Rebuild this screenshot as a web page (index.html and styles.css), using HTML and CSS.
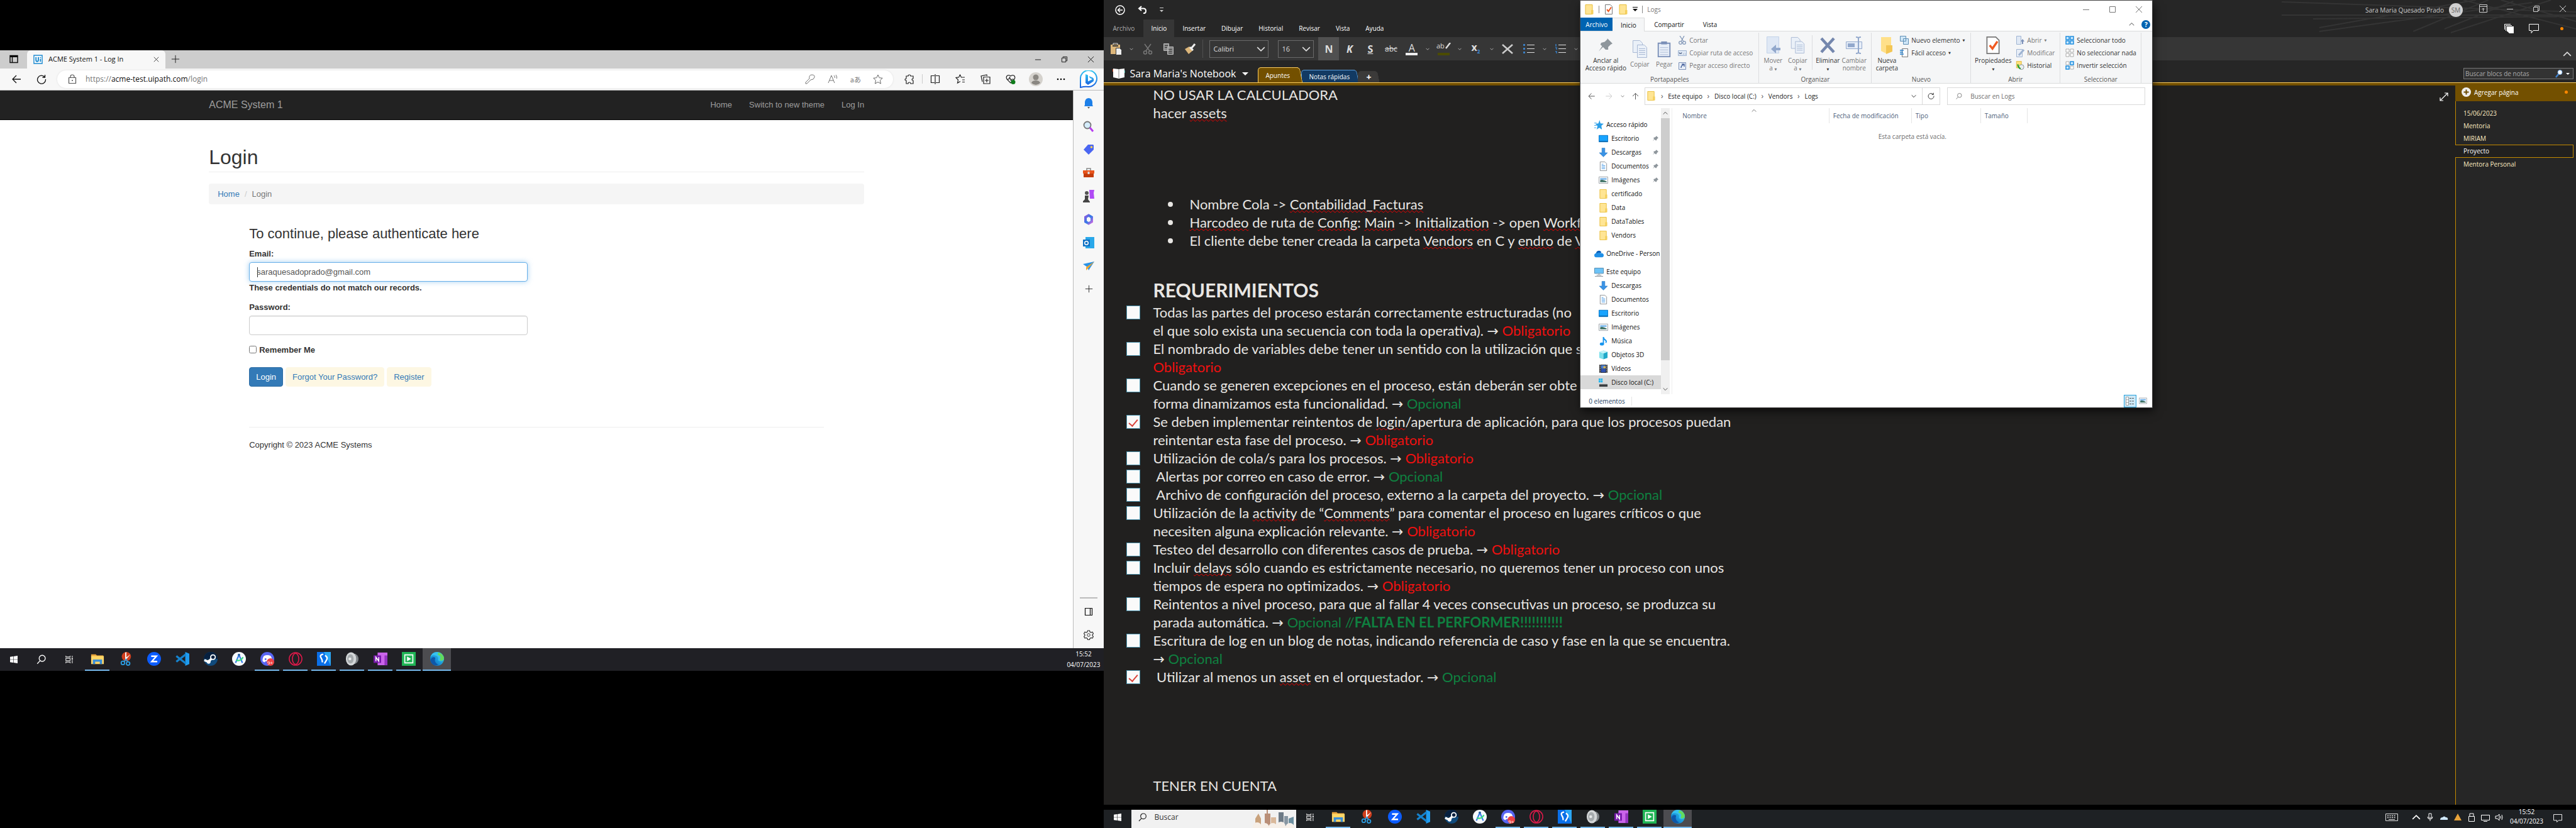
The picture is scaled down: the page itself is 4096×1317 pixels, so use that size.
FILE: index.html
```html
<!DOCTYPE html>
<html lang="es">
<head>
<meta charset="utf-8">
<title>Escritorio</title>
<link rel="stylesheet" href="styles.css">
</head>
<body>
<svg class="sprite" aria-hidden="true">
  <defs>
    <linearGradient id="edgeA" x1="0" y1="1" x2="1" y2="0"><stop offset="0" stop-color="#0c59a4"/><stop offset=".5" stop-color="#1b9de2"/><stop offset="1" stop-color="#5fd85a"/></linearGradient>
    <linearGradient id="bingA" x1="0" y1="0" x2="0" y2="1"><stop offset="0" stop-color="#2fc6f0"/><stop offset="1" stop-color="#1b62e0"/></linearGradient>
    <linearGradient id="m365" x1="0" y1="0" x2="1" y2="1"><stop offset="0" stop-color="#8a5be0"/><stop offset=".5" stop-color="#2f7be8"/><stop offset="1" stop-color="#c86ae0"/></linearGradient>
  </defs>
  <symbol id="i-win" viewBox="0 0 24 24"><path fill="#fff" d="M4 6.300l6.700-1v6.200H4zM11.500 5.200L20 4v7.500h-8.500zM4 12.400h6.700v6.300L4 17.700zM11.500 12.400H20V20l-8.500-1.200z"/></symbol>
  <symbol id="i-find" viewBox="0 0 24 24"><g fill="none" stroke="currentColor" stroke-width="1.800"><circle cx="13.500" cy="9.500" r="6.500"/><path d="M9 14.500L3 21"/></g></symbol>
  <symbol id="i-task" viewBox="0 0 24 24"><g fill="none" stroke="#ddd" stroke-width="1.500"><path d="M5 4v2.500h9V4M5 20v-2.500h9V20M5 9.500h9v5H5zM18.500 4v4M18.500 13v7"/></g><path fill="#ddd" d="M17 9h3v3h-3z"/></symbol>
  <symbol id="i-files" viewBox="0 0 24 24"><path fill="#e8a33a" d="M1 4h8l2 2h11v3H1z"/><path fill="#ffd667" d="M1 7h22v14H1z"/><path fill="#3b8fd8" d="M4 13h16v8h-4v-4H8v4H4z"/></symbol>
  <symbol id="i-snip" viewBox="0 0 24 24"><circle cx="13" cy="8" r="8" fill="#cf3e1d"/><path fill="#fff" d="M11 1l2-1v13h-2zM20 4l-8 10-1-3z"/><g fill="none" stroke="#2c9be0" stroke-width="2"><circle cx="7" cy="19" r="3"/><circle cx="16" cy="20" r="3"/><path d="M9 17l4-5M15 17l-3-5"/></g></symbol>
  <symbol id="i-zoom" viewBox="0 0 24 24"><circle cx="12" cy="12" r="12" fill="#0b5cff"/><path fill="none" stroke="#fff" stroke-width="2.600" d="M7 7.300h9L8 16.700h9.500"/></symbol>
  <symbol id="i-code" viewBox="0 0 24 24"><path fill="#1f9cf0" d="M17 0l7 3v18l-7 3z"/><path fill="none" stroke="#1583cf" stroke-width="3.500" d="M18 4L1.500 17M18 20L1.500 7"/></symbol>
  <symbol id="i-steam" viewBox="0 0 24 24"><circle cx="12" cy="12" r="12" fill="#104a7c"/><path fill="#07203f" d="M0 12a12 12 0 0 1 24 0z"/><circle cx="16" cy="9" r="4" fill="none" stroke="#fff" stroke-width="2"/><path stroke="#fff" stroke-width="4" d="M1 14l7 3 5-5"/><circle cx="8.500" cy="17" r="3.400" fill="#fff"/></symbol>
  <symbol id="i-studio" viewBox="0 0 24 24"><circle cx="12" cy="12" r="12" fill="#f7fafd"/><path fill="none" stroke="#3a7ee8" stroke-width="2.500" d="M12 5L6 19M12 5l6 14"/><path fill="none" stroke="#3ddc84" stroke-width="2.500" d="M7 14q8 3 12-5"/><circle cx="12" cy="5" r="2" fill="#225a9c"/></symbol>
  <symbol id="i-discord" viewBox="0 0 24 24"><circle cx="12" cy="12" r="12" fill="#5865f2"/><path fill="#fff" d="M6 7q6-3 12 0 3 5 2 9l-3 2-2-2H9l-2 2-3-2q-1-4 2-9z"/><circle cx="9" cy="12.500" r="1.600" fill="#5865f2"/><circle cx="17.500" cy="17.500" r="6.500" fill="#ee4245"/></symbol>
  <symbol id="i-opera" viewBox="0 0 24 24"><g fill="none" stroke="#e0194a" stroke-width="1.700"><ellipse cx="12" cy="12" rx="11" ry="11"/><ellipse cx="12" cy="12" rx="5.500" ry="9.500"/></g></symbol>
  <symbol id="i-ss" viewBox="0 0 24 24"><path fill="#0a6fe8" d="M0 0h24v24H0z"/><path fill="#2aa7f5" d="M12 0h12v24z"/><path fill="none" stroke="#fff" stroke-width="2.500" d="M11 4Q4 5 7 10t2 8M14 6q5 3 3 7t-4 7"/></symbol>
  <symbol id="i-speaker" viewBox="0 0 24 24"><ellipse cx="15" cy="12" rx="8" ry="9" fill="#7d8286"/><ellipse cx="10" cy="12" rx="9" ry="11.500" fill="#d3d6d8"/><ellipse cx="9" cy="12" rx="5.500" ry="8" fill="#a5aaad"/><circle cx="8" cy="12" r="2.500" fill="#e8eaeb"/></symbol>
  <symbol id="i-onenote" viewBox="0 0 24 24"><path fill="#ca64ea" d="M7 1h17v22H7z"/><path fill="#9332bf" d="M19 6h5v17h-5z"/><path fill="#7719aa" d="M0 6h13v13H0z"/><path fill="none" stroke="#fff" stroke-width="1.700" d="M4 16V9l5 7V9"/></symbol>
  <symbol id="i-camt" viewBox="0 0 24 24"><path fill="#1fb455" d="M0 0h24v24H0z"/><path fill="none" stroke="#fff" stroke-width="1.800" d="M5 5h14v14H5z"/><path fill="#fff" d="M9 8l7 4-7 4z"/></symbol>
  <symbol id="i-edge" viewBox="0 0 24 24"><circle cx="12" cy="12" r="12" fill="url(#edgeA)"/><path fill="#0f57a8" d="M9 10q-3 8 5 12Q3 26 .5 14 4 7 9 10z"/><path fill="#35c1f1" d="M0 11Q2 5 8 6q7 1 6 7-1 3 6 3 4-1 4-4-1-11-12-12Q2 0 0 11z"/><path fill="#63dc5c" d="M13 5q7 2 4 8-1 2 3 2 4-1 4-4Q22 2 14 1z"/></symbol>
  <symbol id="i-folder" viewBox="0 0 16 16"><path fill="#ffe594" stroke="#e9bf3c" d="M2 .5h11v15H2z"/><path fill="#f4cf5c" d="M11 9h3.500v6.500H11z"/></symbol>
  <symbol id="i-down" viewBox="0 0 16 16"><path fill="#3a93e5" stroke="#2876bf" stroke-width=".6" d="M5.500.5h5v8H15l-7 7-7-7h4.500z"/></symbol>
  <symbol id="i-doc" viewBox="0 0 16 16"><path fill="#fff" stroke="#8a8f94" d="M2.500.5h8l3 3v12h-11z"/><path stroke="#3a93e5" d="M5 4.500h3M5 7h6M5 9.500h6M5 12h6"/></symbol>
  <symbol id="i-desk" viewBox="0 0 16 16"><path fill="#18a3ff" stroke="#0a74c4" d="M.5 2.500h15v11H.5z"/><path stroke="#07528d" d="M1 12.500h14"/></symbol>
  <symbol id="i-img" viewBox="0 0 16 16"><path fill="#fff" stroke="#9aa0a6" d="M.5 2.500h15v11H.5z"/><path fill="#7fb9ec" d="M2.500 4.500h11v3h-11z"/><path fill="#3b6f63" d="M2.500 8q4-2 11 2v1.500h-11z"/></symbol>
  <symbol id="i-music" viewBox="0 0 16 16"><path fill="none" stroke="#1795ee" stroke-width="2" d="M8 13V1q0 3 3 5t1 5"/><ellipse cx="5.500" cy="13" rx="3.500" ry="2.500" fill="#1795ee"/></symbol>
  <symbol id="i-cube" viewBox="0 0 16 16"><path fill="#7de0ec" d="M1 3l7-2.500v15L1 13z"/><path fill="#20a9c9" d="M8 .5L15 3v10l-7 2.500z"/><path fill="#c6f4f8" d="M1 3l7-2.500L15 3 8 5.500z"/></symbol>
  <symbol id="i-video" viewBox="0 0 16 16"><path fill="#333" d="M1 1h14v14H1z"/><path fill="#4a7fd4" d="M4 2h8v6H4z"/><path fill="#2d4fae" d="M4 8.500h8V14H4z"/><path fill="#e9b93c" d="M8 4h4v3H8z"/><path stroke="#ddd" stroke-dasharray="1.500 1.500" d="M2.500 1v14M13.500 1v14"/></symbol>
  <symbol id="i-disk" viewBox="0 0 16 16"><path fill="#19b5f1" d="M0 1h3v3H0zM3.600 1h3v3h-3zM0 4.600h3v3H0zM3.600 4.600h3v3h-3z"/><path fill="#c9ccd0" d="M2 9h12l1 2H1z"/><path fill="#3a3d40" d="M1 11h14v4H1z"/></symbol>
  <symbol id="i-pc" viewBox="0 0 16 16"><path fill="#6cc3f7" stroke="#4d87ad" d="M.5 1.500h15v9H.5z"/><path stroke="#7f8a92" d="M8 11v2M4 13.500h8M1 15.500h14"/></symbol>
  <symbol id="i-cloud" viewBox="0 0 16 16"><path fill="#0a5fb8" d="M3 9q0-6 5-6 3 0 4 3z"/><path fill="#1f8fe6" d="M0 11q0-4 5-4 3-2 6 0 5 0 5 4 0 3-3 3H3q-3 0-3-3z"/></symbol>
  <symbol id="i-star" viewBox="0 0 16 16"><path fill="#2b9fe8" d="M9 0l1.500 5.500L16 6l-4 3.500L13 16l-4.500-3L4 16l1.500-6L2 6.500l5-.8z"/><path stroke="#2b9fe8" d="M0 5h4M0 9h4M0 13h3"/></symbol>
  <symbol id="i-pin" viewBox="0 0 16 16"><path fill="#8e969c" d="M10 0l6 6-2 1-3 3 0 3-3 0-3-3-5 5 4-6-2-2 1-2 4-1 3-3z"/></symbol>
  <symbol id="i-clock" viewBox="0 0 16 16"><path fill="#ffe07a" stroke="#e0b53a" d="M1.500.5h9v12h-9z"/><circle cx="10.500" cy="11" r="4.500" fill="#e9eef0" stroke="#7d868c"/><path stroke="#23a12c" stroke-width="2.500" fill="none" d="M4 6q0 6 5 8"/></symbol>
  <symbol id="i-chev" viewBox="0 0 12 12"><path fill="none" stroke="currentColor" stroke-width="1.400" d="M1 3.500l5 5 5-5"/></symbol>
  <symbol id="i-up" viewBox="0 0 12 12"><path fill="none" stroke="currentColor" stroke-width="1.400" d="M1 8.500l5-5 5 5"/></symbol>
  <symbol id="i-x" viewBox="0 0 12 12"><path fill="none" stroke="currentColor" d="M1 1l10 10M11 1L1 11"/></symbol>
  <symbol id="i-min" viewBox="0 0 12 12"><path stroke="currentColor" d="M1 6.500h10"/></symbol>
  <symbol id="i-max" viewBox="0 0 12 12"><path fill="none" stroke="currentColor" d="M1.500 1.500h9v9h-9z"/></symbol>
  <symbol id="i-rest" viewBox="0 0 12 12"><path fill="none" stroke="currentColor" d="M1.500 3.500h7v7h-7zM3.500 3V1.500h7v7H9"/></symbol>
  <symbol id="i-plus" viewBox="0 0 16 16"><path stroke="currentColor" d="M8 1v14M1 8h14"/></symbol>
  <symbol id="i-left" viewBox="0 0 16 16"><path fill="none" stroke="currentColor" stroke-width="1.300" d="M15 8H2M8 2L2 8l6 6"/></symbol>
  <symbol id="i-ring" viewBox="0 0 16 16"><path fill="none" stroke="currentColor" stroke-width="1.300" d="M13 4.500A6.500 6.500 0 1 0 14.500 8M13.500 1v4H9.500"/></symbol>
  <symbol id="i-sheet" viewBox="0 0 16 16"><path fill="#fff" stroke="#777" d="M2.500.5h8l3 3v12h-11z"/><path fill="none" stroke="#f05a22" stroke-width="2" d="M5 8l2.500 3L12 4.500"/></symbol>
  <symbol id="i-pages" viewBox="0 0 28 28"><path fill="#eaf0f8" stroke="#a9b9d4" d="M3.500.5h11l4 4v15h-15z"/><path fill="#eaf0f8" stroke="#a9b9d4" d="M10.500 7.500h11l4 4v16h-15z"/><path stroke="#a9b9d4" d="M13 13.500h10M13 16.500h10M13 19.500h10M13 22.500h10"/></symbol>
  <symbol id="i-board" viewBox="0 0 28 28"><path fill="#e9eff8" stroke="#7b90b8" stroke-width="2" d="M4 4h20v23H4z"/><path fill="#7b90b8" d="M9 1h10v5H9z"/><path stroke="#a9b9d4" d="M7 11.500h14M7 15.500h14M7 19.500h14M7 23.500h14"/></symbol>
</svg>

<section class="monitor monitor-left" aria-label="Navegador">
  <div class="browser">
    <div class="tabstrip">
      <button class="tab-menu" aria-label="Menú de pestañas"><svg width="14" height="14" viewBox="0 0 14 14"><path fill="none" stroke="#111" stroke-width="1.500" d="M1 1.500h12v11H1zM4.500 4v8"/><path d="M1 1h12v3H1z"/></svg></button>
      <div class="tab">
        <svg width="15" height="15" viewBox="0 0 16 16"><path fill="#fff" stroke="#1c8ad0" stroke-width="1.500" d="M1 1h14v14H1z"/><path fill="none" stroke="#1c8ad0" stroke-width="2" d="M4.500 4v5q0 2.500 2 2.500t2-2.500V4M12 7v5M12 4v1.500"/></svg>
        <span>ACME System 1 - Log In</span>
        <button aria-label="Cerrar pestaña"><svg width="9" height="9"><use href="#i-x"/></svg></button>
      </div>
      <button class="newtab" aria-label="Nueva pestaña"><svg width="14" height="14"><use href="#i-plus"/></svg></button>
      <div class="winbtns">
        <button aria-label="Minimizar"><svg width="11" height="11"><use href="#i-min"/></svg></button>
        <button aria-label="Restaurar"><svg width="11" height="11"><use href="#i-rest"/></svg></button>
        <button aria-label="Cerrar"><svg width="11" height="11"><use href="#i-x"/></svg></button>
      </div>
    </div>
    <div class="toolbar">
      <button class="tool" aria-label="Atrás"><svg width="16" height="16"><use href="#i-left"/></svg></button>
      <button class="tool" aria-label="Actualizar"><svg width="16" height="16"><use href="#i-ring"/></svg></button>
      <div class="address">
        <svg width="14" height="16" viewBox="0 0 14 16"><path fill="none" stroke="#555" stroke-width="1.200" d="M1.500 5.500h11v9h-11zM4 5.500V4q0-3 3-3t3 3v1.500"/><circle cx="7" cy="10" r="1" fill="#555"/></svg>
        <span class="url">https://<b>acme-test.uipath.com</b>/login</span>
        <button aria-label="Contraseña"><svg width="16" height="16" viewBox="0 0 16 16"><path fill="none" stroke="#777" d="M9 9l-6 6H1v-2l6-6q-1-6 4-6t4 4-6 4z"/></svg></button>
        <button aria-label="Leer en voz alta"><svg width="16" height="16" viewBox="0 0 16 16"><path fill="none" stroke="#777" d="M1 14L6 2l5 12M3 10h6M10 2q2 2 1.500 4M13 1q2.500 3 1.500 6"/></svg></button>
        <button aria-label="Traducir">aあ</button>
        <button aria-label="Favorito"><svg width="16" height="16" viewBox="0 0 16 16"><path fill="none" stroke="#666" d="M8 1l2.200 4.700 5 .6-3.700 3.500 1 5.200L8 12.500 3.500 15l1-5.200L.8 6.300l5-.6z"/></svg></button>
      </div>
      <div class="tools">
        <button class="tool" aria-label="Extensiones"><svg width="16" height="16" viewBox="0 0 16 16"><path fill="none" stroke="#222" stroke-width="1.200" d="M3 3h3q0-2 2-2t2 2h4v4q-2 0-2 1.500t2 1.500v5h-4q0-2-2-2t-2 2H3v-5q-2 0-2-1.500T3 7z"/></svg></button>
        <i class="rule"></i>
        <button class="tool" aria-label="Pantalla dividida"><svg width="16" height="16" viewBox="0 0 16 16"><path fill="none" stroke="#222" stroke-width="1.200" d="M7 2.500H1.500v11H7M9 2.500h5.500v11H9M8 0v16"/></svg></button>
        <button class="tool" aria-label="Favoritos"><svg width="16" height="16" viewBox="0 0 16 16"><path fill="none" stroke="#222" stroke-width="1.200" d="M8 11.500L3.500 14l1-5L1 5.500l4.500-.6L7.500 1l2 4H15M11 9h4M11 12.500h4"/></svg></button>
        <button class="tool" aria-label="Colecciones"><svg width="16" height="16" viewBox="0 0 16 16"><path fill="none" stroke="#222" stroke-width="1.200" d="M5 4.500h10v10.500H5zM3 12L1 3l9-2 .5 2M10 7v6M7 10h6"/></svg></button>
        <button class="tool" aria-label="Rendimiento"><svg width="16" height="16" viewBox="0 0 16 16"><path fill="none" stroke="#222" stroke-width="1.200" d="M8 14L2 8q-2-4 1-6 3-1 5 1 2-2 5-1 3 2 1 6zM2 8h3l1.500-3 2 5L10 8h4"/><circle cx="12" cy="12.500" r="3.500" fill="#0f7b1a"/></svg></button>
        <button class="tool" aria-label="Perfil"><svg width="22" height="22" viewBox="0 0 22 22"><circle cx="11" cy="11" r="11" fill="#d5d2cd"/><circle cx="11" cy="8" r="4.500" fill="#8a8782"/><path fill="#8a8782" d="M4 17q1-4 7-4t7 4q-7 6-14 0z"/></svg></button>
        <button class="tool" aria-label="Más"><svg width="14" height="14" viewBox="0 0 14 14"><circle cx="2" cy="7" r="1.300"/><circle cx="7" cy="7" r="1.300"/><circle cx="12" cy="7" r="1.300"/></svg></button>
        <button class="tool bing" aria-label="Bing"><svg width="28" height="28" viewBox="0 0 28 28"><path fill="#fff" stroke="url(#bingA)" stroke-width="2" d="M1 27V14A13 13 0 1 1 14 26Q8 25 1 27z"/><path fill="url(#bingA)" d="M9 6l4 1.500v10L20 14l-4-2-1.500-3 6 2.500q3 2 1 6L13 23l-4-3z"/></svg></button>
      </div>
    </div>
    <div class="viewport">
      <main class="page">
        <nav class="navbar">
          <div class="container">
            <a class="brand" href="#">ACME System 1</a>
            <a href="#">Home</a><a href="#">Switch to new theme</a><a href="#">Log In</a>
          </div>
        </nav>
        <div class="container">
          <h1>Login</h1>
          <ol class="crumbs"><li><a href="#">Home</a></li><li>Login</li></ol>
          <form class="login">
            <h2>To continue, please authenticate here</h2>
            <label for="email">Email:</label>
            <input class="field active" id="email" type="email" value="saraquesadoprado@gmail.com">
            <strong class="error">These credentials do not match our records.</strong>
            <label for="pass">Password:</label>
            <input class="field" id="pass" type="password">
            <label class="remember"><input type="checkbox"> Remember Me</label>
            <div class="actions"><button class="primary" type="button">Login</button><a href="#">Forgot Your Password?</a><a href="#">Register</a></div>
          </form>
          <footer class="foot">Copyright © 2023 ACME Systems</footer>
        </div>
      </main>
      <aside class="sidebar">
        <button aria-label="Notificaciones"><svg width="18" height="18" viewBox="0 0 18 18"><path fill="#1d7fe8" d="M3 12V7q1-6 6-6t6 6v5l1 2H2z"/><path fill="#666" d="M7 15h4l-2 3z"/></svg></button>
        <button aria-label="Buscar"><svg width="18" height="18" viewBox="0 0 18 18"><circle cx="7" cy="7" r="5.500" fill="#d4ecfb" stroke="#777" stroke-width="1.800"/><path stroke="#b63af0" stroke-width="3" d="M11 11l5 6"/></svg></button>
        <button aria-label="Compras"><svg width="18" height="18" viewBox="0 0 18 18"><path fill="#4a66f2" d="M8 1h8l1 1v7l-8 8-8-8z"/><circle cx="13.500" cy="5" r="1.800" fill="#ffd54a"/></svg></button>
        <button aria-label="Herramientas"><svg width="18" height="18" viewBox="0 0 18 18"><path fill="none" stroke="#888" stroke-width="1.500" d="M6 5V2h6v3"/><path fill="#c23c0c" d="M1 8h16v8H1z"/><path fill="#e8541c" d="M0 5h18v5H0z"/><path fill="#ddd" d="M7.500 7h3v4h-3z"/></svg></button>
        <button aria-label="Juegos"><svg width="18" height="20" viewBox="0 0 18 20"><path fill="#b04af5" d="M10 0h8l-1 5 1 9h-7z"/><circle cx="6" cy="5" r="3" fill="#555"/><path fill="#444" d="M3 9h6l-1 6 3 4v1H0v-2l3-3z"/></svg></button>
        <button aria-label="Microsoft 365"><svg width="18" height="18" viewBox="0 0 18 18"><path fill="none" stroke="url(#m365)" stroke-width="4" d="M9 2.500l5 3v7l-5 3-5-3v-7z"/></svg></button>
        <button aria-label="Outlook"><svg width="18" height="18" viewBox="0 0 18 18"><path fill="#2aa8ea" d="M4 0h14v18H4z"/><path fill="#1272c4" d="M0 4h11v11H0z"/><circle cx="5.500" cy="9.500" r="2.800" fill="none" stroke="#fff" stroke-width="1.500"/></svg></button>
        <button aria-label="Enviar"><svg width="18" height="18" viewBox="0 0 18 18"><path fill="#2a93e8" d="M0 6l18-4-9 14-2-5z"/><path fill="#f0a52b" d="M18 2L5 11v5l4-4z"/></svg></button>
        <button aria-label="Agregar"><svg width="13" height="13"><use href="#i-plus"/></svg></button>
        <i class="spacer"></i>
        <button aria-label="Ocultar barra"><svg width="14" height="14" viewBox="0 0 14 14"><path fill="none" stroke="#111" stroke-width="1.200" d="M1.500 1.500h11v11h-11zM9.500 2v10"/></svg></button>
        <button aria-label="Configuración"><svg width="16" height="16" viewBox="0 0 16 16"><path fill="none" stroke="#333" stroke-width="1.200" d="M6.500 1h3l.5 2 2 1 2-.7 1.500 2.500L14 7.500v1.500l1.500 1.500L14 13l-2-.5-2 1-.5 2h-3L6 13.500l-2-1-2 .5-1.500-2.500L2 9V7.500L.5 5.800 2 3.300 4 4l2-1z"/><circle cx="8" cy="8" r="2.300" fill="none" stroke="#333"/></svg></button>
      </aside>
    </div>
  </div>
  <div class="taskbar left">
    <button class="sys" aria-label="Inicio"><svg><use href="#i-win"/></svg></button>
    <button class="sys" aria-label="Buscar"><svg><use href="#i-find"/></svg></button>
    <button class="sys" aria-label="Vista de tareas"><svg><use href="#i-task"/></svg></button>
    <button class="app open" aria-label="Explorador"><svg><use href="#i-files"/></svg></button>
    <button class="app" aria-label="Recortes"><svg><use href="#i-snip"/></svg></button>
    <button class="app" aria-label="Zoom"><svg><use href="#i-zoom"/></svg></button>
    <button class="app" aria-label="Visual Studio Code"><svg><use href="#i-code"/></svg></button>
    <button class="app" aria-label="Steam"><svg><use href="#i-steam"/></svg></button>
    <button class="app" aria-label="Android Studio"><svg><use href="#i-studio"/></svg></button>
    <button class="app open" aria-label="Discord"><svg><use href="#i-discord"/></svg><span class="count">9+</span></button>
    <button class="app open" aria-label="Opera"><svg><use href="#i-opera"/></svg></button>
    <button class="app open" aria-label="Studio"><svg><use href="#i-ss"/></svg></button>
    <button class="app open" aria-label="Altavoz"><svg><use href="#i-speaker"/></svg></button>
    <button class="app open" aria-label="OneNote"><svg><use href="#i-onenote"/></svg></button>
    <button class="app open" aria-label="Camtasia"><svg><use href="#i-camt"/></svg></button>
    <button class="app open current" aria-label="Edge"><svg><use href="#i-edge"/></svg></button>
    <time class="clock">15:52<br>04/07/2023</time>
  </div>
</section>

<section class="monitor monitor-right" aria-label="OneNote">
  <div class="onenote">
    <header class="on-head">
      <svg class="rays" viewBox="0 0 470 58" preserveAspectRatio="none"><path fill="none" stroke="#343434" stroke-width="2" d="M0 3l470 16M0 24h470M50 30l420-4M60 44L310 0M60 50L400 4M210 50L330 0M260 46L370 2M290 0l180 46M350 0l120 34M270 52L430 0"/></svg>
      <div class="on-title">
        <svg width="16" height="16" viewBox="0 0 16 16"><g fill="none" stroke="#fff" stroke-width="1.500"><circle cx="8" cy="8" r="7"/><path d="M12 8H5M8 4.500L4.500 8 8 11.500"/></g></svg>
        <svg width="15" height="13" viewBox="0 0 15 13"><path fill="none" stroke="#fff" stroke-width="2" d="M6 1L2 4.500 6 8M2 4.500h7q4 0 4 4T9 12"/></svg>
        <svg width="6" height="8" viewBox="0 0 6 8"><path fill="#ccc" d="M0 0h6v1H0zM0 4h6L3 7z"/></svg>
        <div class="on-user"><span>Sara Maria Quesado Prado</span><b>SM</b></div>
        <div class="on-win">
          <svg width="13" height="13" viewBox="0 0 13 13"><path fill="none" stroke="#ccc" d="M.5.5h12v12H.5zM.5 3.500h12M6.500 11V6M4.500 8l2-2 2 2"/></svg>
          <svg width="12" height="12"><use href="#i-min"/></svg>
          <svg width="12" height="12"><use href="#i-rest"/></svg>
          <svg width="12" height="12"><use href="#i-x"/></svg>
        </div>
      </div>
      <div class="on-menu">
        <button class="dim">Archivo</button><button class="sel">Inicio</button><button>Insertar</button><button>Dibujar</button><button>Historial</button><button>Revisar</button><button>Vista</button><button>Ayuda</button>
        <div class="on-extra">
          <svg width="15" height="15" viewBox="0 0 15 15"><path fill="none" stroke="#fff" d="M.5 9V.5H10M2.500 11V2.500H12"/><path fill="#fff" d="M4 4h11v11H8l-3-3H4z"/></svg>
          <svg width="16" height="15" viewBox="0 0 16 15"><path fill="none" stroke="#fff" d="M.5.5h15v10H7l-3 4v-4H.5z"/></svg>
          <i class="dot"></i>
        </div>
      </div>
    </header>
    <div class="on-ribbon">
      <button class="r-paste" aria-label="Pegar"><svg width="18" height="20" viewBox="0 0 18 20"><path fill="#dcb67a" d="M0 3h15v15H0z"/><path fill="none" stroke="#ddd" d="M4 3V1h7v2"/><path fill="#363636" d="M3 4h9v2H3z"/><path fill="#eee" stroke="#363636" d="M8.500 8.500h6l3 3v8h-9z"/></svg></button>
      <button class="r-14" aria-label="Más opciones"><svg width="6" height="6"><use href="#i-chev"/></svg></button>
      <button class="r-38" aria-label="Cortar"><svg width="16" height="18" viewBox="0 0 16 18"><g fill="none" stroke="#777" stroke-width="1.500"><path d="M3 1l8 11M13 1L5 12"/><circle cx="4" cy="14.500" r="2.500"/><circle cx="12" cy="14.500" r="2.500"/></g></svg></button>
      <button class="r-28" aria-label="Copiar"><svg width="16" height="18" viewBox="0 0 16 18"><path fill="#888" stroke="#bbb" d="M.5.500h8v11h-8zM6.500 5.500h9v12h-9z"/><path stroke="#333" d="M2 3.500h5M2 6.500h4M8.500 9.500h5M8.500 12.500h5M8.500 15.500h5"/></svg></button>
      <button class="r-40" aria-label="Copiar formato"><svg width="17" height="17" viewBox="0 0 17 17"><path fill="#dcb67a" d="M7 5l6 6-7 6-6-8z"/><path stroke="#eee" stroke-width="3" d="M8 6l5 5M11 7l5-6"/></svg></button>
      <i class="r-rule"></i>
      <label class="combo font"><select aria-label="Fuente"><option>Calibri</option></select><svg width="14" height="14"><use href="#i-chev"/></svg></label>
      <label class="combo size"><select aria-label="Tamaño"><option>16</option></select><svg width="14" height="14"><use href="#i-chev"/></svg></label>
      <button class="r-33 on"><b>N</b></button>
      <button class="r-33"><b><i>K</i></b></button>
      <button class="r-33"><b><u>S</u></b></button>
      <button class="r-33 strike"><s>abc</s></button>
      <button class="r-33"><span class="ink white">A</span></button>
      <button class="r-17" aria-label="Más colores"><svg width="6" height="6"><use href="#i-chev"/></svg></button>
      <button class="r-34"><span class="ink olive"><small>ab</small><svg width="10" height="12" viewBox="0 0 10 12"><path stroke="#ddd" stroke-width="2.500" d="M9 0L2 9"/></svg></span></button>
      <button class="r-17" aria-label="Más resaltados"><svg width="6" height="6"><use href="#i-chev"/></svg></button>
      <button class="r-34"><b>x<sub>2</sub></b></button>
      <button class="r-17" aria-label="Más posiciones"><svg width="6" height="6"><use href="#i-chev"/></svg></button>
      <button class="r-34" aria-label="Borrar formato"><svg width="18" height="16" viewBox="0 0 18 16"><path stroke="#ccc" stroke-width="2.500" d="M1 1l16 14M17 1L1 15"/></svg></button>
      <button class="r-34" aria-label="Viñetas"><svg width="18" height="16" viewBox="0 0 18 16"><path fill="#3a7fc4" d="M0 0h3v3H0zM0 6h3v3H0zM0 12h3v3H0z"/><path stroke="#ddd" d="M6 1.500h12M6 7.500h12M6 13.500h12"/></svg></button>
      <button class="r-15" aria-label="Más viñetas"><svg width="6" height="6"><use href="#i-chev"/></svg></button>
      <button class="r-36" aria-label="Numeración"><svg width="18" height="16" viewBox="0 0 18 16"><path stroke="#3a7fc4" stroke-width="1.500" d="M2 0v4M1 6h2v3M1 12h2v3"/><path stroke="#ddd" d="M6 1.500h12M6 7.500h12M6 13.500h12"/></svg></button>
      <button class="r-14" aria-label="Más numeraciones"><svg width="6" height="6"><use href="#i-chev"/></svg></button>
      <svg class="collapse" width="14" height="14"><use href="#i-up"/></svg>
    </div>
    <div class="on-tabs">
      <svg class="book" width="20" height="16" viewBox="0 0 20 16"><path fill="#d8512f" d="M0 1h2v4H0z"/><path fill="#2fa08c" d="M18 3h2v4h-2z"/><path fill="#fff" d="M1 0l9 1 9-1v14l-9 2-9-2z"/><path stroke="#888" d="M10 1v14"/></svg>
      <button class="notebook">Sara Maria's Notebook <i></i></button>
      <button class="sec brown">Apuntes</button>
      <button class="sec blue">Notas rápidas</button>
      <button class="sec grey">+</button>
      <label class="on-search"><input type="search" placeholder="Buscar blocs de notas" aria-label="Buscar blocs de notas"><svg width="12" height="14" viewBox="0 0 12 14"><path stroke="#3f7fc9" stroke-width="2.500" d="M5 8l-4 5"/><circle cx="7.500" cy="5" r="3.500" fill="#fff" stroke="#7fb2ea"/></svg><i></i></label>
    </div>
    <div class="on-body">
      <article class="note">
        <p>NO USAR LA CALCULADORA</p>
        <p>hacer <u>assets</u></p>
        <ul class="bullets">
          <li>Nombre Cola -&gt; <u>Contabilidad_Facturas</u></li>
          <li><u>Harcodeo</u> de ruta de <u>Config</u>: <u>Main</u> -&gt; <u>Initialization</u> -&gt; open <u>Workf</u></li>
          <li>El cliente debe tener creada la carpeta <u>Vendors</u> en C y <u>endro</u> de <u>V</u></li>
        </ul>
        <h2>REQUERIMIENTOS</h2>
        <ul class="todo">
          <li><input type="checkbox" id="t1"><label for="t1">Todas las partes del proceso estarán correctamente estructuradas (no<br>el que solo exista una secuencia con toda la operativa). <span class="arr">→</span> <em>Obligatorio</em></label></li>
          <li><input type="checkbox" id="t2"><label for="t2">El nombrado de variables debe tener un sentido con la utilización que s<br><em>Obligatorio</em></label></li>
          <li><input type="checkbox" id="t3"><label for="t3">Cuando se generen excepciones en el proceso, están deberán ser obte<br>forma dinamizamos esta funcionalidad. <span class="arr">→</span> <q>Opcional</q></label></li>
          <li><input type="checkbox" id="t4" checked><label for="t4">Se deben implementar reintentos de <u>login</u>/apertura de aplicación, para que los procesos puedan<br>reintentar esta fase del proceso. <span class="arr">→</span> <em>Obligatorio</em></label></li>
          <li><input type="checkbox" id="t5"><label for="t5">Utilización de cola/s para los procesos. <span class="arr">→</span> <em>Obligatorio</em></label></li>
          <li><input type="checkbox" id="t6"><label for="t6">&nbsp;Alertas por correo en caso de error. <span class="arr">→</span> <q>Opcional</q></label></li>
          <li><input type="checkbox" id="t7"><label for="t7">&nbsp;Archivo de configuración del proceso, externo a la carpeta del proyecto. <span class="arr">→</span> <q>Opcional</q></label></li>
          <li><input type="checkbox" id="t8"><label for="t8">Utilización de la <u>activity</u> de “<u>Comments</u>” para comentar el proceso en lugares críticos o que<br>necesiten alguna explicación relevante. <span class="arr">→</span> <em>Obligatorio</em></label></li>
          <li><input type="checkbox" id="t9"><label for="t9">Testeo del desarrollo con diferentes casos de prueba. <span class="arr">→</span> <em>Obligatorio</em></label></li>
          <li><input type="checkbox" id="t10"><label for="t10">Incluir <u>delays</u> sólo cuando es estrictamente necesario, no queremos tener un proceso con unos<br>tiempos de espera no optimizados. <span class="arr">→</span> <em>Obligatorio</em></label></li>
          <li><input type="checkbox" id="t11"><label for="t11">Reintentos a nivel proceso, para que al fallar 4 veces consecutivas un proceso, se produzca su<br>parada automática. <span class="arr">→</span> <q>Opcional //<b>FALTA EN EL PERFORMER!!!!!!!!!!!</b></q></label></li>
          <li><input type="checkbox" id="t12"><label for="t12">Escritura de log en un blog de notas, indicando referencia de caso y fase en la que se encuentra.<br><span class="arr">→</span> <q>Opcional</q></label></li>
          <li><input type="checkbox" id="t13" checked><label for="t13">&nbsp;Utilizar al menos un <u>asset</u> en el orquestador. <span class="arr">→</span> <q>Opcional</q></label></li>
        </ul>
        <p class="last">TENER EN CUENTA</p>
        <svg class="expand" width="14" height="14" viewBox="0 0 14 14"><path fill="none" stroke="#fff" stroke-width="1.200" d="M1 13L13 1M8 1h5v5M1 8v5h5"/></svg>
      </article>
      <aside class="pages">
        <button class="addpage"><svg width="15" height="15" viewBox="0 0 15 15"><circle cx="7.500" cy="7.500" r="7.500" fill="#eee"/><path stroke="#6b4a00" stroke-width="2" d="M7.500 3.500v8M3.500 7.500h8"/></svg>Agregar página<i class="dot"></i></button>
        <ul><li>15/06/2023</li><li>Mentoria</li><li>MIRIAM</li><li class="sel">Proyecto</li><li>Mentora Personal</li></ul>
      </aside>
    </div>
  </div>

  <div class="taskbar right">
    <button class="sys" aria-label="Inicio"><svg><use href="#i-win"/></svg></button>
    <label class="tsearch"><svg><use href="#i-find"/></svg><input type="text" placeholder="Buscar" aria-label="Buscar">
      <svg class="city" viewBox="0 0 70 28"><path fill="#c9a27c" d="M5 24V14l5-8 4 8v12z"/><path fill="#b98f78" d="M20 26V6h3V0h2v6h4v20z"/><path fill="#d9b89a" d="M30 26V12h8v14z"/><path fill="#6d7a86" d="M42 22V4h8v18z"/><path fill="#8796a2" d="M51 26V10h6v16z"/><path fill="#6c8fa0" d="M58 26V14l8-3v15z"/><g fill="#f6efe8"><circle cx="8" cy="27" r="7"/><circle cx="20" cy="28" r="7"/><circle cx="33" cy="28" r="7"/><circle cx="46" cy="26" r="7"/><circle cx="60" cy="28" r="7"/></g></svg></label>
    <button class="sys" aria-label="Vista de tareas"><svg><use href="#i-task"/></svg></button>
    <button class="app open" aria-label="Explorador"><svg><use href="#i-files"/></svg></button>
    <button class="app" aria-label="Recortes"><svg><use href="#i-snip"/></svg></button>
    <button class="app" aria-label="Zoom"><svg><use href="#i-zoom"/></svg></button>
    <button class="app" aria-label="Visual Studio Code"><svg><use href="#i-code"/></svg></button>
    <button class="app" aria-label="Steam"><svg><use href="#i-steam"/></svg></button>
    <button class="app" aria-label="Android Studio"><svg><use href="#i-studio"/></svg></button>
    <button class="app open" aria-label="Discord"><svg><use href="#i-discord"/></svg><span class="count">9+</span></button>
    <button class="app open" aria-label="Opera"><svg><use href="#i-opera"/></svg></button>
    <button class="app open" aria-label="Studio"><svg><use href="#i-ss"/></svg></button>
    <button class="app open" aria-label="Altavoz"><svg><use href="#i-speaker"/></svg></button>
    <button class="app open" aria-label="OneNote"><svg><use href="#i-onenote"/></svg></button>
    <button class="app open" aria-label="Camtasia"><svg><use href="#i-camt"/></svg></button>
    <button class="app open current" aria-label="Edge"><svg><use href="#i-edge"/></svg></button>
    <div class="tray">
      <svg class="keys" viewBox="0 0 20 14"><path fill="none" stroke="#ddd" d="M.5 1.500h19v11H.5z"/><path stroke="#ddd" stroke-width="1.500" stroke-dasharray="2 1.500" d="M3 4.500h14M3 7.500h14"/><path stroke="#ddd" d="M5 10.500h10"/></svg>
      <svg viewBox="0 0 12 12"><use href="#i-up"/></svg>
      <svg viewBox="0 0 14 14"><path fill="none" stroke="#fff" d="M5 1h4v7H5zM3 6q0 4 4 4t4-4M7 10v3"/></svg>
      <svg viewBox="0 0 14 14"><path fill="#cfe8ff" d="M1 11q0-4 4-4 2-3 5 0 4 0 3 4z"/></svg>
      <svg viewBox="0 0 14 14"><path fill="#e8a33a" d="M7 1l6 11H1z"/></svg>
      <svg viewBox="0 0 14 14"><path fill="none" stroke="#fff" d="M4 5V1h6v4M2.500 5.500h9v8h-9z"/></svg>
      <svg viewBox="0 0 14 14"><path fill="none" stroke="#fff" d="M.5 3.500h13v8H.5zM4 13.500h6"/></svg>
      <svg viewBox="0 0 14 14"><path fill="none" stroke="#fff" d="M1 5h3l3-3v10L4 9H1zM9 5q1 2 0 4M11 3q2 4 0 8"/></svg>
    </div>
    <time class="clock">15:52<br>04/07/2023</time>
    <svg class="bell" viewBox="0 0 15 15"><path fill="none" stroke="#fff" d="M.5.5h14v10H9l-3 3v-3H.5z"/></svg>
  </div>

  <div class="explorer">
    <div class="ex-title">
      <svg width="16" height="16"><use href="#i-folder"/></svg><i></i><svg width="16" height="16"><use href="#i-sheet"/></svg><svg width="16" height="16"><use href="#i-folder"/></svg><svg width="8" height="8" viewBox="0 0 8 8"><path d="M0 0h8v1H0zM0 3h8L4 7z"/></svg><i></i><span>Logs</span>
      <div class="ex-win"><svg width="12" height="12"><use href="#i-min"/></svg><svg width="12" height="12"><use href="#i-max"/></svg><svg width="12" height="12"><use href="#i-x"/></svg></div>
    </div>
    <div class="ex-tabs"><button class="file">Archivo</button><button class="sel">Inicio</button><button>Compartir</button><button>Vista</button>
      <svg class="fold" width="9" height="9"><use href="#i-up"/></svg><b>?</b></div>
    <div class="ex-ribbon">
      <fieldset><div>
        <button class="big w72"><svg width="22" height="28" viewBox="0 0 16 16"><use href="#i-pin"/></svg>Anclar al<br>Acceso rápido</button>
        <button class="big w36 off"><svg width="28" height="28"><use href="#i-pages"/></svg>Copiar</button>
        <button class="big w42 off"><svg width="26" height="28"><use href="#i-board"/></svg>Pegar</button>
        <ul class="off"><li><svg viewBox="0 0 14 14"><g fill="none" stroke="#8398b8" stroke-width="1.300"><path d="M3 0l6 9M10 0L5 9"/><circle cx="4" cy="11" r="2.300"/><circle cx="10" cy="11" r="2.300"/></g></svg>Cortar</li><li><svg viewBox="0 0 14 14"><path fill="#dfe8f4" stroke="#9fb4d2" d="M.5 3.500h13v8H.5z"/><path fill="none" stroke="#5f7294" d="M2 6l1 3 1-2 1 2 1-3M8 9h1M11 9h1"/></svg>Copiar ruta de acceso</li><li><svg viewBox="0 0 14 14"><path fill="#e9eff8" stroke="#7b90b8" d="M1.500 2.500h11v11h-11z"/><path fill="none" stroke="#4d68a0" stroke-width="1.500" d="M5 11q0-4 4-5M6 5h4v4"/></svg>Pegar acceso directo</li></ul>
      </div><legend>Portapapeles</legend></fieldset>
      <fieldset><div class="pad2">
        <button class="big w40 off"><svg width="24" height="28" viewBox="0 0 24 28"><path fill="#dfe8f5" stroke="#c3d2e8" d="M2.500.5h19v26h-19z"/><path fill="#92a8cc" d="M24 18v4h-7v5l-8-7 8-7v5z"/></svg>Mover<br>a <small>▼</small></button>
        <button class="big w38 off"><svg width="26" height="28"><use href="#i-pages"/></svg>Copiar<br>a <small>▼</small></button>
        <i></i>
        <button class="big w42"><svg width="24" height="28" viewBox="0 0 24 28"><path stroke="#7487ad" stroke-width="4.500" d="M2 3l20 22M22 3L2 25"/></svg>Eliminar<br><small>▼</small></button>
        <button class="big w42 off"><svg width="26" height="28" viewBox="0 0 26 28"><path fill="#e7eef8" stroke="#92a8cc" d="M.5 8.500h25v11H.5z"/><path fill="#92a8cc" d="M3 11h11v6H3z"/><path fill="none" stroke="#92a8cc" stroke-width="2" d="M20 2v24M16 1q4 0 4 2 0-2 4-2M16 27q4 0 4-2 0 2 4 2"/></svg>Cambiar<br>nombre</button>
      </div><legend>Organizar</legend></fieldset>
      <fieldset><div class="pad4">
        <button class="big w40"><svg width="20" height="28" viewBox="0 0 20 28"><path fill="#ffe08a" d="M1 1h16v22l-8 4-8-4z"/><path fill="#f3c655" d="M9 14h10v10l-10 4z"/></svg>Nueva<br>carpeta</button>
        <ul><li><svg viewBox="0 0 14 14"><path fill="#cfe6f7" stroke="#5f8fb5" d="M.5.5h9v8h-9zM5.500 4.500h8v9h-8z"/></svg>Nuevo elemento <small>▼</small></li><li><svg viewBox="0 0 14 14"><path fill="#fff" stroke="#777" d="M3.500.5h9v13h-9z"/><path stroke="#1f7fd0" stroke-width="1.500" d="M0 3h6M0 6h5M0 9h6"/></svg>Fácil acceso <small>▼</small></li></ul>
      </div><legend>Nuevo</legend></fieldset>
      <fieldset><div>
        <button class="big w70"><svg width="28" height="28"><use href="#i-sheet"/></svg>Propiedades<br><small>▼</small></button>
        <ul><li class="off"><svg viewBox="0 0 14 14"><path fill="#e0e9f5" stroke="#9fb4d2" d="M1.500.5h7v13h-7z"/><path fill="#7b90b8" d="M11 5l3 4h-2v4h-2V9H8z"/></svg>Abrir <small>▼</small></li><li class="off"><svg viewBox="0 0 14 14"><path fill="#e9eff8" stroke="#9fb4d2" d="M1.500 1.500h9v12h-9z"/><path stroke="#9fb4d2" stroke-width="3" d="M5 11l8-9"/></svg>Modificar</li><li><svg><use href="#i-clock"/></svg>Historial</li></ul>
      </div><legend>Abrir</legend></fieldset>
      <fieldset><div class="pad7">
        <ul><li><svg viewBox="0 0 14 14"><path fill="#cdeaff" stroke="#1f8fe0" stroke-width="1.500" d="M1 1h5v5H1zM8 1h5v5H8zM1 8h5v5H1zM8 8h5v5H8z"/></svg>Seleccionar todo</li><li><svg viewBox="0 0 14 14"><path fill="#fff" stroke="#aaa" d="M1 1h5v5H1zM8 1h5v5H8zM1 8h5v5H1zM8 8h5v5H8z"/></svg>No seleccionar nada</li><li><svg viewBox="0 0 14 14"><path fill="#fff" stroke="#aaa" d="M1 1h5v5H1zM8 8h5v5H8z"/><path fill="#cdeaff" stroke="#1f8fe0" stroke-width="1.500" d="M8 1h5v5H8zM1 8h5v5H1z"/></svg>Invertir selección</li></ul>
      </div><legend>Seleccionar</legend></fieldset>
    </div>
    <div class="ex-nav">
      <svg class="n1" width="13" height="12"><use href="#i-left"/></svg>
      <svg class="n2" width="13" height="12"><use href="#i-left"/></svg>
      <svg class="n3" width="6" height="6"><use href="#i-chev"/></svg>
      <svg class="n4" width="13" height="12"><use href="#i-left"/></svg>
      <div class="path"><svg width="15" height="15"><use href="#i-folder"/></svg><span>›</span><a href="#">Este equipo</a><span>›</span><a href="#">Disco local (C:)</a><span>›</span><a href="#">Vendors</a><span>›</span><a href="#">Logs</a><svg class="drop" width="8" height="8"><use href="#i-chev"/></svg><i></i><svg width="11" height="11"><use href="#i-ring"/></svg></div>
      <label class="ex-search"><svg width="12" height="12"><use href="#i-find"/></svg><input type="search" placeholder="Buscar en Logs" aria-label="Buscar en Logs"></label>
    </div>
    <div class="ex-main">
      <div class="tree">
        <ul>
          <li class="top"><svg><use href="#i-star"/></svg>Acceso rápido</li>
          <li><svg><use href="#i-desk"/></svg>Escritorio<svg class="pin"><use href="#i-pin"/></svg></li>
          <li><svg><use href="#i-down"/></svg>Descargas<svg class="pin"><use href="#i-pin"/></svg></li>
          <li><svg><use href="#i-doc"/></svg>Documentos<svg class="pin"><use href="#i-pin"/></svg></li>
          <li><svg><use href="#i-img"/></svg>Imágenes<svg class="pin"><use href="#i-pin"/></svg></li>
          <li><svg><use href="#i-folder"/></svg>certificado</li>
          <li><svg><use href="#i-folder"/></svg>Data</li>
          <li><svg><use href="#i-folder"/></svg>DataTables</li>
          <li><svg><use href="#i-folder"/></svg>Vendors</li>
          <li class="top gap"><svg><use href="#i-cloud"/></svg>OneDrive - Person</li>
          <li class="top gap"><svg><use href="#i-pc"/></svg>Este equipo</li>
          <li><svg><use href="#i-down"/></svg>Descargas</li>
          <li><svg><use href="#i-doc"/></svg>Documentos</li>
          <li><svg><use href="#i-desk"/></svg>Escritorio</li>
          <li><svg><use href="#i-img"/></svg>Imágenes</li>
          <li><svg><use href="#i-music"/></svg>Música</li>
          <li><svg><use href="#i-cube"/></svg>Objetos 3D</li>
          <li><svg><use href="#i-video"/></svg>Vídeos</li>
          <li class="sel"><svg><use href="#i-disk"/></svg>Disco local (C:)</li>
        </ul>
        <div class="scroll"><svg width="8" height="8"><use href="#i-up"/></svg><i></i><svg width="8" height="8"><use href="#i-chev"/></svg></div>
      </div>
      <div class="list">
        <svg class="sort" width="8" height="8"><use href="#i-up"/></svg>
        <table><thead><tr><th>Nombre</th><th>Fecha de modificación</th><th>Tipo</th><th>Tamaño</th></tr></thead></table>
        <p>Esta carpeta está vacía.</p>
      </div>
    </div>
    <div class="ex-status"><span>0 elementos</span>
      <button class="on" aria-label="Detalles"><svg width="14" height="14" viewBox="0 0 14 14"><path fill="#fff" stroke="#888" stroke-width=".8" d="M.5.5h4v13h-4zM.5 4.800h4M.5 9.200h4"/><path stroke="#555" stroke-dasharray="3 1" d="M6 2.500h8M6 7h8M6 11.500h8"/></svg></button>
      <button aria-label="Iconos"><svg width="13" height="13"><use href="#i-img"/></svg></button></div>
  </div>
</section>
</body>
</html>
```
FILE: styles.css
```css
* { box-sizing: border-box; }
body {
  margin: 0; height: 100vh; overflow: hidden; background: #000;
  display: grid; grid-template-columns: 3fr 4fr;
  font: 10px/14px "Open Sans", "Noto Sans", sans-serif; color: #111;
}
button, input, select { font: inherit; color: inherit; margin: 0; }
button { background: none; border: 0; padding: 0; white-space: nowrap; }
button, a, label, li, span { white-space: nowrap; }
ul, ol { list-style: none; margin: 0; padding: 0; }
a { text-decoration: none; color: inherit; }
svg { flex: none; display: block; }
.sprite { position: absolute; width: 0; height: 0; }
.monitor { min-width: 0; min-height: 0; }
.monitor-left { display: grid; grid-template-rows: 87fr 1040fr 40fr 273fr; }
.browser { grid-row: 2; min-height: 0; display: flex; flex-direction: column; }

/* browser chrome */
.tabstrip { height: 29px; background: #cdcdcd; display: flex; align-items: stretch; }
.tabstrip button { display: grid; place-items: center; }
.tab-menu { width: 43px; }
.tab { width: 220px; background: #f7f7f7; border-radius: 6px 6px 0 0; display: flex; align-items: center; gap: 9px; padding: 0 9px 0 10px; font-size: 11px; }
.tab button { margin-left: auto; width: 12px; }
.newtab { width: 32px; }
.winbtns { margin-left: auto; display: flex; }
.winbtns button { width: 42px; }
.toolbar { height: 35px; background: #f7f7f7; display: flex; align-items: center; padding-left: 6px; border-bottom: 1px solid #bbb; }
.tool { width: 40px; display: grid; place-items: center; }
.address { flex: 1; height: 28px; margin-left: 5px; background: #fff; border-radius: 14px; box-shadow: 0 0 3px #ddd; display: flex; align-items: center; padding: 0 6px 0 17px; }
.address button { width: 36px; display: grid; place-items: center; color: #777; font: 11px/14px "Noto Sans CJK JP", sans-serif; }
.url { font-size: 12px; color: #767676; margin: 0 auto 0 14px; }
.url b { font-weight: 400; color: #111; }
.tools { display: flex; align-items: center; padding-left: 6px; }
.tools .rule { width: 1px; height: 15px; background: #ccc; }
.tools .bing { width: 48px; }
.viewport { flex: 1; min-height: 0; display: flex; background: #fff; }
.page { flex: 1; font: 13px/19px "Liberation Sans", Arial, sans-serif; color: #333; }
.sidebar { width: 49px; background: #f7f7f7; border-left: 1px solid #bbb; display: flex; flex-direction: column; align-items: stretch; padding: 2px 0; }
.sidebar button { height: 36px; display: grid; place-items: center; margin-bottom: 1px; }
.sidebar .spacer { margin: auto 10px 3px; border-bottom: 2px solid #bbb; }

/* web page */
.navbar { background: #222; border-bottom: 1px solid #080808; height: 47px; display: flex; color: #9d9d9d; }
.container { width: 1042px; max-width: 100%; margin: 0 auto; }
.navbar .container { display: flex; align-items: center; gap: 27px; }
.brand { font-size: 16px; margin-right: auto; }
.page h1 { font-size: 32px; line-height: 36px; font-weight: 500; margin: 41px 0 18px; padding-bottom: 5px; border-bottom: 1px solid #eee; }
.crumbs { background: #f5f5f5; border-radius: 4px; display: flex; padding: 7px 14px; color: #777; }
.crumbs li + li::before { content: "/"; color: #ccc; padding: 0 8px; }
.crumbs a { color: #337ab7; }
.login { padding: 35px 64px 0; display: flex; flex-direction: column; align-items: flex-start; }
.login h2 { font-size: 22px; line-height: 24px; font-weight: 500; margin: 0 0 10px; }
.login label { font-weight: 700; margin-bottom: 4px; }
.field { width: 443px; height: 31px; border: 1px solid #ccc; border-radius: 4px; background: #fff; padding: 5px 11px; color: #555; box-shadow: inset 0 1px 1px #00000013; outline: 0; }
.field.active { border-color: #66afe9; box-shadow: 0 0 8px #66afe999; background: linear-gradient(#333, #333) 12px 7px / 1px 16px no-repeat #fff; }
.error { margin-bottom: 12px; }
.login .remember { margin: 14px 0 0; display: flex; align-items: center; gap: 4px; height: 19px; }
.remember input { width: 12px; height: 12px; }
.actions { display: flex; gap: 4px; margin-top: 18px; }
.actions > * { height: 31px; line-height: 29px; padding: 0 10px; border: 1px solid #fdf7e3; border-radius: 4px; background: #fdf7e3; color: #337ab7; }
.actions .primary { background: #337ab7; border-color: #2e6da4; color: #fff; }
.foot { margin: 64px 64px 0; padding-top: 18px; border-top: 1px solid #eee; }

/* taskbars */
.taskbar { background: #202025; display: flex; align-items: stretch; min-height: 0; color: #fff; }
.taskbar.left { grid-row: 3; }
.taskbar svg { width: 22px; height: 22px; }
.sys, .app { position: relative; display: grid; place-items: center; width: 44px; }
.sys svg { width: 18px; height: 18px; }
.app { width: 45px; border-bottom: 2px solid transparent; }
.app.open::after { content: ""; position: absolute; left: 3px; right: 3px; bottom: -2px; height: 2px; background: #76b9ed; }
.app.current { background: #4c4c50; }
.app.current::after { left: 0; right: 0; }
.count { position: absolute; left: 23px; top: 50%; font-size: 8px; line-height: 12px; color: #fff; }
.clock { margin-left: auto; width: 65px; text-align: center; line-height: 17px; padding-top: 1px; }

/* OneNote */
.monitor-right { position: relative; display: grid; grid-template-rows: 1400fr 8fr 32fr; }
.onenote { min-height: 0; display: flex; flex-direction: column; background: #262626; color: #fff; overflow: hidden; }
.on-head { position: relative; }
.rays { position: absolute; right: 0; top: 0; width: 20%; height: 58px; }
.on-title { position: relative; height: 31px; display: flex; align-items: center; gap: 20px; padding-left: 18px; }
.on-user { margin-left: auto; display: flex; align-items: center; gap: 8px; color: #ccc; margin-right: 4px; }
.on-user b { width: 22px; height: 22px; border-radius: 11px; background: #d0d0d0; color: #666; font-weight: 400; line-height: 22px; text-align: center; }
.on-win { display: flex; align-items: center; gap: 30px; padding: 0 15px 4px 2px; color: #ccc; }
.on-menu { position: relative; height: 28px; display: flex; align-items: stretch; }
.on-menu button { margin: 0 12px 0 13px; }
.on-menu .dim { color: #aaa; margin: 0; width: 63px; }
.on-menu .sel { margin: 0; width: 49px; background: #363636; }
.on-extra { margin-left: auto; display: flex; align-items: center; gap: 24px; padding-right: 20px; }
.on-extra .dot { margin-left: 10px; }
.dot { width: 5px; height: 5px; border-radius: 3px; background: #f80; }
.on-ribbon { height: 37px; flex: none; background: #363636; display: flex; align-items: stretch; color: #ddd; padding-left: 3px; font-size: 16px; }
.on-ribbon button { display: grid; place-items: center; }
.r-14 { width: 14px; } .r-15 { width: 15px; } .r-17 { width: 17px; } .r-28 { width: 28px; } .r-33 { width: 33px; }
.r-34, .r-paste { width: 34px; } .r-36 { width: 36px; } .r-38 { width: 38px; } .r-40 { width: 40px; }
.r-33.on { background: #505050; }
.on-ribbon .strike { font-size: 12px; }
.r-rule { width: 1px; margin: 4px 10px 4px 0; background: #505050; }
.combo { display: grid; align-self: center; height: 28px; font-size: 11px; }
.combo > * { grid-area: 1 / 1; }
.combo svg { justify-self: end; align-self: center; margin-right: 5px; pointer-events: none; }
.combo select { appearance: none; width: 100%; height: 28px; background: #363636; border: 1px solid #6a6a6a; border-radius: 0; padding: 0 5px; }
.font { width: 94px; margin-right: 15px; }
.size { width: 57px; margin-right: 7px; }
.ink { display: flex; width: 19px; height: 20px; justify-content: center; border-bottom: 4px solid #eee; line-height: 16px; }
.ink.olive { border-color: #4b4b00; }
.ink small { font-size: 11px; line-height: 10px; }
.on-ribbon sub { font-size: 8px; line-height: 8px; color: #3f8fdf; }
.collapse { margin: auto 7px 3px auto; }
.on-tabs { height: 36px; flex: none; display: flex; align-items: flex-end; border-bottom: 1px solid #ffcf60; padding-left: 14px; }
.book { margin-bottom: 6px; }
.notebook { font-size: 16px; line-height: 22px; margin: 0 0 3px 7px; width: 204px; text-align: left; display: flex; align-items: center; gap: 9px; }
.notebook i { border: 5px solid transparent; border-top-color: #fff; border-bottom: 0; }
.sec { position: relative; height: 24px; padding: 0 6px 0 11px; margin-right: 5px; border: 1px solid #ffcf60; border-width: 1px 0 0 1px; border-radius: 5px 0 0 0; background: #735000; width: 64px; text-align: left; z-index: 1; }
.sec::after { content: ""; position: absolute; right: -5px; top: -1px; bottom: 0; width: 12px; background: inherit; border: inherit; border-width: 1px 1px 0 0; border-radius: 0 5px 0 0; transform: skewX(11deg); z-index: -1; }
.sec.blue { height: 20px; width: 85px; background: #123a63; border-color: #5a9bd8; z-index: 0; }
.sec.grey { height: 18px; width: 28px; background: #3b3a39; border-color: #3b3a39; font-size: 14px; font-weight: 700; padding-left: 12px; z-index: 0; }
.on-search { margin: 0 4px 5px auto; width: 175px; height: 18px; border: 1px solid #777; background: #333; display: flex; align-items: center; gap: 5px; padding: 0 5px 0 2px; }
.on-search input { flex: 1; min-width: 0; background: none; border: 0; padding: 0; outline: 0; }
.on-search input::placeholder { color: #aaa; opacity: 1; }
.on-search i { border: 3px solid transparent; border-top-color: #fff; border-bottom: 0; }
.on-body { flex: 1; min-height: 0; display: flex; border-top: 4px solid #735000; background: #21201f; }
.note { position: relative; flex: 1; min-width: 0; padding-left: 36px; font: 22px/29px Lato, Carlito, sans-serif; color: #e8e6e3; }
.note p { margin: 0 0 0 42px; }
.note u { text-decoration: underline wavy #f00000 1px; text-underline-offset: 1px; text-decoration-skip-ink: none; }
.bullets { margin: 116px 0 44px 100px; }
.bullets li { position: relative; }
.bullets li::before { content: ""; position: absolute; left: -34px; top: 11px; width: 8px; height: 8px; border-radius: 4px; background: #e8e6e3; }
.note h2 { font-size: 30px; line-height: 41px; margin: 0 0 0 42px; font-weight: 700; }
.todo li { display: flex; gap: 20px; align-items: flex-start; }
.todo input { appearance: none; width: 22px; height: 22px; margin-top: 4px; background: #fafafa; border: 1px solid #4b93ad; flex: none; display: grid; place-items: center; }
.todo input:checked::before { content: ""; width: 6px; height: 12px; border: solid #d9423a; border-width: 0 2px 2px 0; transform: rotate(40deg); }
.todo em { font-style: normal; color: #f01010; }
.todo q { quotes: none; color: #0f8040; }
.arr { font: 22px/20px "DejaVu Sans", sans-serif; }
.note .last { margin-top: 144px; }
.expand { position: absolute; right: 11px; top: 11px; }
.pages { width: 192px; background: #262626; display: flex; flex-direction: column; }
.addpage { height: 25px; background: #735000; display: flex; align-items: center; gap: 5px; padding: 0 13px 4px 10px; }
.addpage .dot { margin-left: auto; }
.pages ul { flex: 1; border-left: 1px solid #c48a00; padding-top: 9px; }
.pages li { height: 20px; line-height: 20px; padding-left: 12px; color: #fdebc0; }
.pages li.sel { margin: 0 4px 0 -1px; padding-left: 13px; height: 21px; line-height: 19px; border: 1px solid #c48a00; border-left: 0; background: #21201f; color: #fff; }
.taskbar.right { grid-row: 3; background: #1e2124; }
.taskbar.right .app svg, .taskbar.right .sys svg { margin-top: -4px; }
.tsearch { width: 262px; background: #f1f1f1; color: #222; display: flex; align-items: center; padding-left: 10px; gap: 10px; overflow: hidden; }
.tsearch input { border: 0; background: none; padding: 0 0 4px; font-size: 12px; flex: 1; min-width: 0; outline: 0; }
.tsearch input::placeholder { color: #333; opacity: 1; }
.taskbar .tsearch svg { width: 16px; height: 16px; margin-bottom: 4px; }
.taskbar .tsearch .city { width: 70px; height: 30px; margin: 0; }
.tray { margin-left: auto; display: flex; align-items: center; gap: 8px; padding-bottom: 4px; }
.taskbar .tray svg, .taskbar .bell { width: 14px; height: 14px; }
.taskbar .tray .keys { width: 20px; margin-right: 14px; }
.taskbar.right .clock { margin: -4px 0 0 4px; line-height: 15px; padding-top: 0; }
.taskbar .bell { margin: 7px 22px 0 10px; }

/* Explorer window */
.explorer { position: absolute; left: 32.380%; top: 1px; width: 38.840%; height: 49.130%; background: #fff; box-shadow: 0 0 0 1px #444, 2px 6px 14px #000a; display: flex; flex-direction: column; }
.ex-title { height: 27px; display: flex; align-items: center; padding-left: 6px; gap: 7px; color: #777; }
.ex-title > i { width: 1px; height: 12px; background: #888; }
.ex-win { margin-left: auto; display: flex; gap: 30px; padding-right: 15px; color: #777; }
.ex-tabs { height: 22px; display: flex; border-bottom: 1px solid #dadbdc; }
.ex-tabs button { padding: 0 15px; }
.ex-tabs .file { width: 51px; padding: 0; background: #0063b1; color: #fff; }
.ex-tabs .sel { width: 51px; padding: 0; border: 1px solid #dadbdc; border-width: 1px 1px 0 0; background: #f5f6f7; margin-bottom: -1px; }
.ex-tabs .fold { margin: 6px 11px 0 auto; color: #777; }
.ex-tabs b { width: 14px; height: 14px; margin: 4px 3px 0 0; border-radius: 7px; background: #0063b1; color: #fff; text-align: center; }
.ex-ribbon { height: 83px; background: #f5f6f7; border-bottom: 1px solid #dadbdc; display: grid; grid-template-columns: 284fr 179fr 158fr 142fr 129fr 17fr; color: #333; }
.ex-ribbon fieldset { min-width: 0; margin: 2px 0; padding: 2px 0 0; border: 0; border-right: 1px solid #dcdddf; display: flex; flex-direction: column; }
.ex-ribbon fieldset > div { display: flex; height: 65px; padding-left: 4px; }
.ex-ribbon fieldset:nth-child(4) > div { padding-left: 0; }
.ex-ribbon fieldset > .pad2 { padding-left: 2px; }
.ex-ribbon fieldset > .pad7 { padding-left: 7px; }
.ex-ribbon fieldset > div > i { width: 1px; margin: 2px 3px 8px 4px; background: #dcdddf; }
.ex-ribbon legend { order: 2; float: left; width: 100%; text-align: center; padding: 0; color: #555; }
.ex-ribbon .off { color: #777; }
.big { display: block; padding-top: 4px; line-height: 12px; text-align: center; height: 60px; }
.big svg { margin: 0 auto 4px; }
.w36 { width: 36px; } .w38 { width: 38px; } .w40 { width: 40px; } .w42 { width: 42px; } .w70 { width: 70px; } .w72 { width: 72px; }
.ex-ribbon li { height: 20px; display: flex; align-items: center; gap: 4px; }
.ex-ribbon li svg { width: 14px; height: 14px; }
.ex-ribbon ul { padding-left: 1px; }
.ex-ribbon small { font: 5px/8px "DejaVu Sans", sans-serif; }
.ex-nav { height: 39px; display: flex; align-items: center; color: #555; padding: 0 11px; }
.ex-nav .n2 { margin-left: 15px; color: #ccc; transform: scaleX(-1); }
.ex-nav .n3 { margin-left: 12px; }
.ex-nav .n4 { margin: 0 8px 0 11px; transform: rotate(90deg); }
.path { flex: 476 0 0; min-width: 0; height: 28px; border: 1px solid #d9d9d9; display: flex; align-items: center; padding: 0 8px 0 2px; color: #222; }
.path span { width: 19px; text-align: center; font-size: 12px; color: #555; }
.path .drop { margin: 0 9px 0 auto; }
.path i { width: 1px; align-self: stretch; background: #d9d9d9; margin-right: 8px; }
.ex-search { flex: 313 0 0; min-width: 0; height: 28px; margin-left: 11px; border: 1px solid #d9d9d9; display: flex; align-items: center; padding-left: 12px; gap: 12px; color: #777; }
.ex-search input { border: 0; padding: 0; flex: 1; min-width: 0; outline: 0; background: none; }
.ex-search input::placeholder { color: #6d6d6d; opacity: 1; }
.ex-main { flex: 1; min-height: 0; display: flex; }
.tree { width: 146px; display: flex; border-right: 1px solid #eee; overflow: hidden; }
.tree ul { width: 128px; padding-top: 15px; overflow: hidden; }
.tree li { height: 22px; display: flex; align-items: center; gap: 5px; padding-left: 29px; }
.tree li svg { width: 15px; height: 15px; }
.tree li.top { padding-left: 22px; gap: 4px; }
.tree li.gap { margin-top: 7px; }
.tree li.sel { background: #d9d9d9; }
.tree li .pin { width: 9px; height: 9px; margin: 0 4px 0 auto; }
.scroll { width: 14px; background: #f0f0f0; display: flex; flex-direction: column; align-items: center; color: #444; padding: 4px 0; }
.scroll i { flex: 1; width: 14px; background: #cdcdcd; margin: 4px 0 42px; }
.list { position: relative; flex: 1; text-align: center; color: #6d6d6d; }
.list .sort { position: absolute; left: 126px; top: 0; }
.list table { border-collapse: collapse; table-layout: fixed; width: 564px; text-align: left; color: #4c607a; }
.list th { font-weight: 400; text-align: left; height: 24px; padding: 0 0 0 6px; border-right: 1px solid #e5e5e5; }
.list th:first-child { width: 249px; padding-left: 16px; }
.list th:nth-child(2) { width: 131px; } .list th:nth-child(3) { width: 110px; } .list th:nth-child(4) { width: 74px; }
.list p { margin: 14px 0 0; }
.ex-status { height: 21px; display: flex; align-items: center; padding: 0 5px 0 13px; color: #25405f; }
.ex-status span { margin-right: auto; padding-right: 10px; border-right: 1px solid #e5e5e5; }
.ex-status button { width: 20px; height: 20px; display: grid; place-items: center; }
.ex-status .on { background: #cce8f7; border: 1px solid #26a0da; }
```
